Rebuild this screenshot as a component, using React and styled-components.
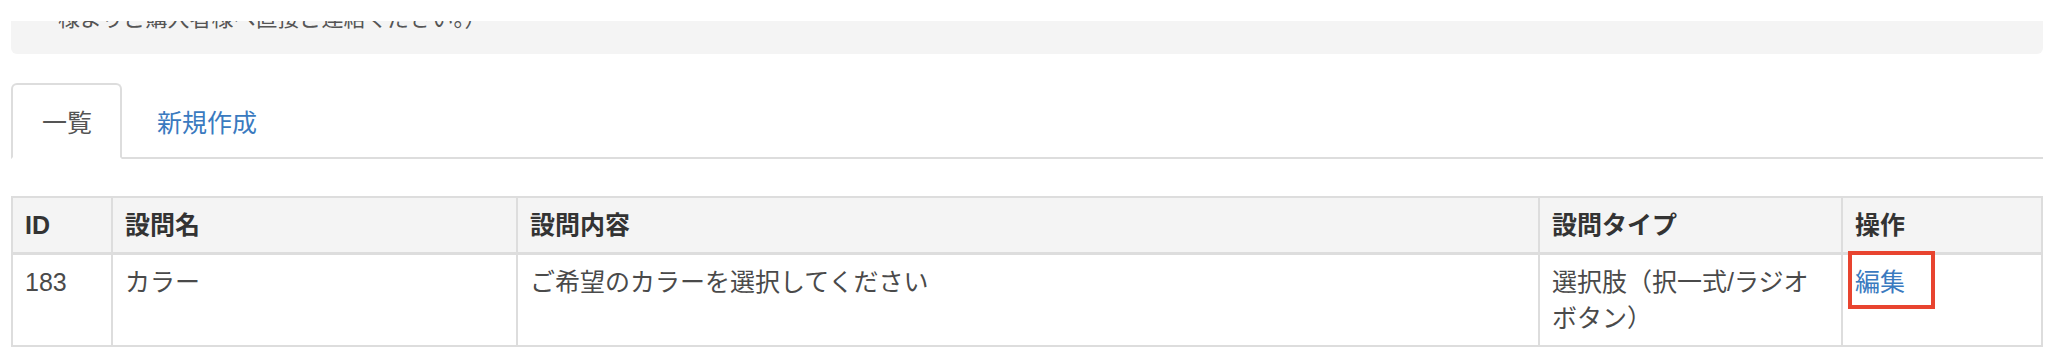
import React from "react";
import styled, { createGlobalStyle } from "styled-components";

const GlobalStyle = createGlobalStyle`
  body {
    margin: 0;
    background: #ffffff;
    font-family: "Liberation Sans", "Noto Sans CJK JP", sans-serif;
    color: #444;
  }
`;

const questions = [
  {
    id: 183,
    name: "カラー",
    body: "ご希望のカラーを選択してください",
    type: "選択肢（択一式/ラジオボタン）",
  },
];

const App = () => {
  return (
    <>
      <GlobalStyle />
      <Page>
        <Notice>
          <NoticeText>様よりご購入者様へ直接ご連絡ください。）</NoticeText>
        </Notice>
        <Tabs>
          <Tab active>一覧</Tab>
          <Tab>新規作成</Tab>
        </Tabs>
        <Table>
          <colgroup>
            <col style={{ width: 100 }} />
            <col style={{ width: 405 }} />
            <col style={{ width: 1022 }} />
            <col style={{ width: 303 }} />
            <col />
          </colgroup>
          <thead>
            <tr>
              <Th>ID</Th>
              <Th>設問名</Th>
              <Th>設問内容</Th>
              <Th>設問タイプ</Th>
              <Th>操作</Th>
            </tr>
          </thead>
          <tbody>
            {questions.map((q) => (
              <tr key={q.id}>
                <Td>{q.id}</Td>
                <Td>{q.name}</Td>
                <Td>{q.body}</Td>
                <Td>{q.type}</Td>
                <Td>
                  <EditWrap>
                    <EditLink href="#">編集</EditLink>
                    <Highlight />
                  </EditWrap>
                </Td>
              </tr>
            ))}
          </tbody>
        </Table>
      </Page>
    </>
  );
};

const Page = styled.div`
  width: 2032px;
  margin-left: 11px;
  padding-top: 21px;
`;

const Notice = styled.div`
  height: 33px;
  overflow: hidden;
  background-color: #f4f4f4;
  border-radius: 0 0 6px 6px;
  padding-left: 47px;
`;

const NoticeText = styled.p`
  margin: -17px 0 0;
  font-size: 22px;
  line-height: 30px;
  color: #555;
  white-space: nowrap;
`;

const Tabs = styled.div`
  display: flex;
  gap: 4px;
  margin-top: 29px;
  border-bottom: 2px solid #dddddd;
`;

const Tab = styled.a`
  display: block;
  height: 72px;
  padding: 0 28px 0 29px;
  margin-bottom: -2px;
  font-size: 25px;
  line-height: 76px;
  text-decoration: none;
  cursor: pointer;
  border: 2px solid ${({ active }) => (active ? "#dddddd" : "transparent")};
  border-bottom-color: ${({ active }) => (active ? "#ffffff" : "transparent")};
  border-radius: 6px 6px 0 0;
  background: ${({ active }) => (active ? "#ffffff" : "transparent")};
  color: ${({ active }) => (active ? "#555555" : "#3a7abf")};
`;

const Table = styled.table`
  width: 2032px;
  margin-top: 37px;
  border-collapse: collapse;
  table-layout: fixed;
  font-size: 25px;
  line-height: 36px;
`;

const Th = styled.th`
  padding: 9px 12px;
  text-align: left;
  font-weight: 700;
  color: #333;
  background-color: #f4f4f4;
  border: 2px solid #dddddd;
  border-bottom-width: 3px;
  vertical-align: middle;
`;

const Td = styled.td`
  padding: 9px 12px;
  color: #4a4a4a;
  border: 2px solid #dddddd;
  vertical-align: top;
`;

const EditWrap = styled.span`
  position: relative;
  display: inline-block;
`;

const EditLink = styled.a`
  color: #3a7abf;
  text-decoration: none;
`;

const Highlight = styled.span`
  position: absolute;
  left: -7px;
  top: -13px;
  width: 87px;
  height: 58px;
  box-sizing: border-box;
  border: 4px solid #e8442f;
  pointer-events: none;
`;

export default App;
